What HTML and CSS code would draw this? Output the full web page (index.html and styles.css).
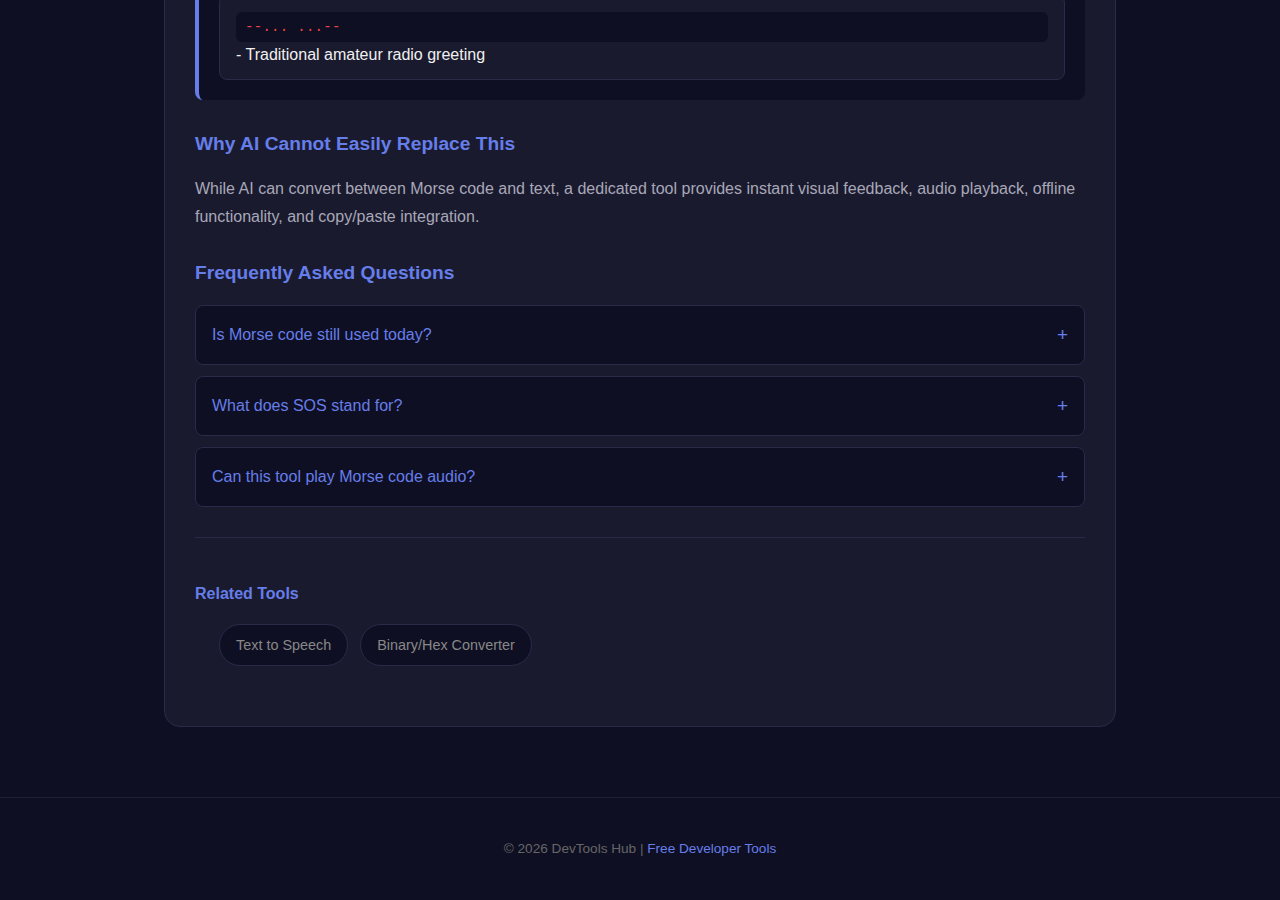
FILE: index.html
```html
<!DOCTYPE html>
<html lang="en">
<head>
  <meta charset="utf-8">
  <meta name="viewport" content="width=device-width, initial-scale=1.0">
  <title>Morse Code Translator - DevTools Hub</title>
  <link rel="stylesheet" href="styles.css">
</head>
<body>
  <main class="main">
    <div class="tool-card">
      <div class="example-box">
        <div class="example">
          <div class="example-code">--... ...--</div>
          <div class="example-note">- Traditional amateur radio greeting</div>
        </div>
      </div>

      <h3>Why AI Cannot Easily Replace This</h3>
      <p>While AI can convert between Morse code and text, a dedicated tool provides instant visual feedback, audio playback, offline functionality, and copy/paste integration.</p>

      <h3>Frequently Asked Questions</h3>
      <div class="faq-item">
        <span>Is Morse code still used today?</span>
        <span class="faq-toggle">+</span>
      </div>
      <div class="faq-item">
        <span>What does SOS stand for?</span>
        <span class="faq-toggle">+</span>
      </div>
      <div class="faq-item">
        <span>Can this tool play Morse code audio?</span>
        <span class="faq-toggle">+</span>
      </div>

      <hr class="divider">

      <div class="related">
        <h4>Related Tools</h4>
        <ul class="related-list">
          <li><a href="#" class="chip">Text to Speech</a></li>
          <li><a href="#" class="chip">Binary/Hex Converter</a></li>
        </ul>
      </div>
    </div>
  </main>

  <footer class="footer">
    &copy; 2026 DevTools Hub | <a href="#">Free Developer Tools</a>
  </footer>
</body>
</html>
```

FILE: styles.css
```css
body {
  font-family: "Liberation Sans", Arial, sans-serif;
  margin: 0;
  padding: 0;
  background-color: #0f0f23;
  color: #e0e0e0;
  overflow: hidden;
}

.main {
  padding: 0 20px 70px;
}

.tool-card {
  max-width: 890px;
  margin: -56px auto 0;
  padding: 30px;
  background-color: #1a1a2e;
  border: 1px solid #2a2a4a;
  border-radius: 16px;
}

.example-box {
  background-color: #0f0f23;
  border-left: 4px solid #667eea;
  border-radius: 8px;
  padding: 20px;
  margin-bottom: 32px;
}

.example {
  background-color: #1a1a2e;
  border: 1px solid #2a2a4a;
  border-radius: 8px;
  padding: 16px 16px 15px;
}

.example-code {
  font-family: "Liberation Mono", "Courier New", monospace;
  font-size: 14px;
  letter-spacing: 0.3px;
  line-height: 18px;
  color: #ef4444;
  background-color: #0f0f23;
  border-radius: 6px;
  padding: 6px 9px;
  margin-bottom: 4px;
}

.example-note {
  font-size: 16px;
  color: #f0f0f0;
}

h3 {
  font-size: 1.2rem;
  line-height: 24px;
  color: #667eea;
  margin: 30px 0 20px;
}

p {
  font-size: 16px;
  line-height: 28px;
  color: #a8a8b8;
  margin: -1px 0 16px;
}

.faq-item {
  display: flex;
  justify-content: space-between;
  align-items: center;
  background-color: #0f0f23;
  border: 1px solid #2a2a4a;
  border-radius: 8px;
  padding: 20px 16px;
  margin-bottom: 10.5px;
  color: #667eea;
  font-size: 16px;
  line-height: 18.4px;
}

.faq-toggle {
  font-size: 19px;
}

.divider {
  border: none;
  border-top: 1px solid #2a2a4a;
  margin: 30px 0 47px;
}

.related h4 {
  font-size: 16px;
  line-height: 18px;
  color: #667eea;
  margin: 0 0 21px;
}

.related-list {
  list-style: none;
  margin: 0 0 30px;
  padding: 0 0 0 24px;
  display: flex;
  gap: 12px;
}

.chip {
  display: inline-block;
  padding: 12px 16px;
  font-size: 14.4px;
  line-height: 16px;
  color: #888;
  text-decoration: none;
  background-color: #0f0f23;
  border: 1px solid #2a2a4a;
  border-radius: 21px;
}

.footer {
  border-top: 1px solid #1f1f38;
  padding: 43px 20px 40px;
  text-align: center;
  font-size: 13.6px;
  color: #666;
}

.footer a {
  color: #667eea;
  text-decoration: none;
}
```
